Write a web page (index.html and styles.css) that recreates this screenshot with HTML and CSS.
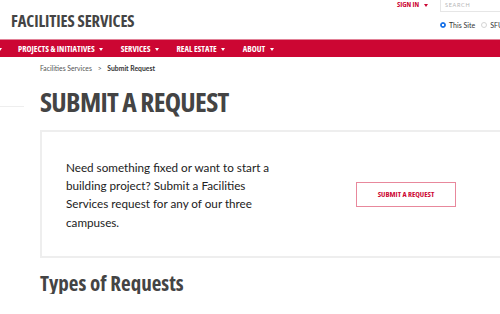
FILE: index.html
```html
<!DOCTYPE html>
<html>
<head>
    <meta charset="UTF-8">
    <title>Submit a Request - Facilities Services</title>
    <link rel="stylesheet" href="styles.css">
</head>
<body>
    <header class="masthead">
        <div class="site-name">FACILITIES SERVICES</div>
        <div class="utility">
            <div class="utility-top">
                <a class="sign-in" href="#">SIGN IN <span class="caret"></span></a>
                <div class="search-box">SEARCH</div>
            </div>
            <div class="scope">
                <label class="radio"><span class="dot checked"></span>This Site</label>
                <label class="radio"><span class="dot"></span>SFU</label>
            </div>
        </div>
    </header>
    <nav class="main-nav">
        <span class="nav-item first"><span class="caret white"></span></span>
        <span class="nav-item">PROJECTS &amp; INITIATIVES <span class="caret white"></span></span>
        <span class="nav-item">SERVICES <span class="caret white"></span></span>
        <span class="nav-item">REAL ESTATE <span class="caret white"></span></span>
        <span class="nav-item">ABOUT <span class="caret white"></span></span>
    </nav>
    <div class="page">
        <div class="side-rule"></div>
        <main class="content">
            <div class="breadcrumb">Facilities Services <span class="sep">&gt;</span> <strong>Submit Request</strong></div>
            <h1>SUBMIT A REQUEST</h1>
            <section class="request-box">
                <p>Need something fixed or want to start a building project? Submit a Facilities Services request for any of our three campuses.</p>
                <a class="request-button" href="#">SUBMIT A REQUEST</a>
            </section>
            <h2>Types of Requests</h2>
        </main>
    </div>
</body>
</html>
```

FILE: styles.css
```css
body {
    margin: 0;
    font-family: "Lato", "Noto Sans", sans-serif;
    color: #222;
    background: #fff;
    overflow: hidden;
}
.masthead {
    display: flex;
    justify-content: space-between;
    height: 39px;
}
.site-name {
    font-family: "Open Sans", sans-serif;
    font-stretch: 75%;
    font-weight: bold;
    font-size: 16.5px;
    letter-spacing: -0.1px;
    line-height: 1;
    color: #444;
    padding: 13px 0 0 11px;
}
.utility {
    display: flex;
    flex-direction: column;
    width: 60px;
}
.utility-top {
    display: flex;
    align-items: flex-start;
    margin-left: -43px;
}
.sign-in {
    font-family: "Open Sans", sans-serif;
    font-stretch: 75%;
    font-weight: bold;
    font-size: 7.5px;
    line-height: 1;
    color: #cc0633;
    text-decoration: none;
    padding-top: 1px;
    width: 43px;
    white-space: nowrap;
}
.search-box {
    flex: 1;
    height: 12px;
    box-sizing: border-box;
    border: 1px solid #e6e6e6;
    border-top: none;
    border-right: none;
    font-size: 5.5px;
    letter-spacing: 0.7px;
    color: #b5b5b5;
    padding-left: 4px;
    line-height: 10px;
}
.scope {
    display: flex;
    gap: 6px;
    margin-top: 10px;
    font-size: 7px;
    line-height: 6px;
    color: #333;
    white-space: nowrap;
}
.radio {
    display: flex;
    align-items: center;
    gap: 3px;
}
.dot {
    width: 4px;
    height: 4px;
    border-radius: 50%;
    border: 1px solid #d4d4d4;
}
.dot.checked {
    border-color: #1a73e8;
    background: radial-gradient(circle, #fff 35%, #1a73e8 50%);
}
.caret {
    display: inline-block;
    width: 0;
    height: 0;
    border-left: 2.5px solid transparent;
    border-right: 2.5px solid transparent;
    border-top: 3px solid #cc0633;
    vertical-align: middle;
    margin-left: 3px;
}
.caret.white {
    border-top-color: #fff;
}
.main-nav {
    display: flex;
    align-items: center;
    height: 18px;
    background: #cc0633;
    border-top: 1px solid #e28197;
    box-sizing: border-box;
    font-family: "Open Sans", sans-serif;
    font-stretch: 75%;
    font-weight: bold;
    font-size: 8.5px;
    color: #fff;
    white-space: nowrap;
}
.nav-item {
    margin-right: 17.5px;
}
.nav-item.first {
    margin-left: -5px;
    margin-right: 16px;
}
.page {
    display: flex;
}
.side-rule {
    width: 24px;
    height: 1px;
    background: #eee;
    margin-top: 49px;
    flex-shrink: 0;
}
.content {
    flex: 1;
    padding-left: 16px;
}
.breadcrumb {
    font-size: 6.8px;
    line-height: 1;
    color: #555;
    margin-top: 8px;
}
.breadcrumb .sep {
    margin: 0 4px;
}
.breadcrumb strong {
    color: #333;
}
h1 {
    font-family: "Open Sans", sans-serif;
    font-stretch: 75%;
    font-weight: bold;
    font-size: 27.5px;
    letter-spacing: -0.7px;
    color: #444;
    margin: 16px 0 0 0;
    line-height: 1;
}
.request-box {
    display: flex;
    align-items: center;
    height: 128px;
    box-sizing: border-box;
    margin-top: 15px;
    margin-right: -10px;
    border: 2px solid #eeeeee;
    padding: 0 24px;
}
.request-box p {
    width: 212px;
    flex-shrink: 0;
    font-size: 11.7px;
    line-height: 18.3px;
    margin: 0;
    color: #222;
}
.request-button {
    margin-left: 78px;
    width: 100px;
    height: 25px;
    flex-shrink: 0;
    box-sizing: border-box;
    border: 1px solid #e8889c;
    color: #cc0633;
    text-decoration: none;
    font-family: "Open Sans", sans-serif;
    font-stretch: 75%;
    font-weight: bold;
    font-size: 7.8px;
    display: flex;
    align-items: center;
    justify-content: center;
}
h2 {
    font-family: "Open Sans", sans-serif;
    font-stretch: 75%;
    font-weight: bold;
    font-size: 21px;
    color: #444;
    margin: 15px 0 0 0;
    line-height: 1;
}
```
